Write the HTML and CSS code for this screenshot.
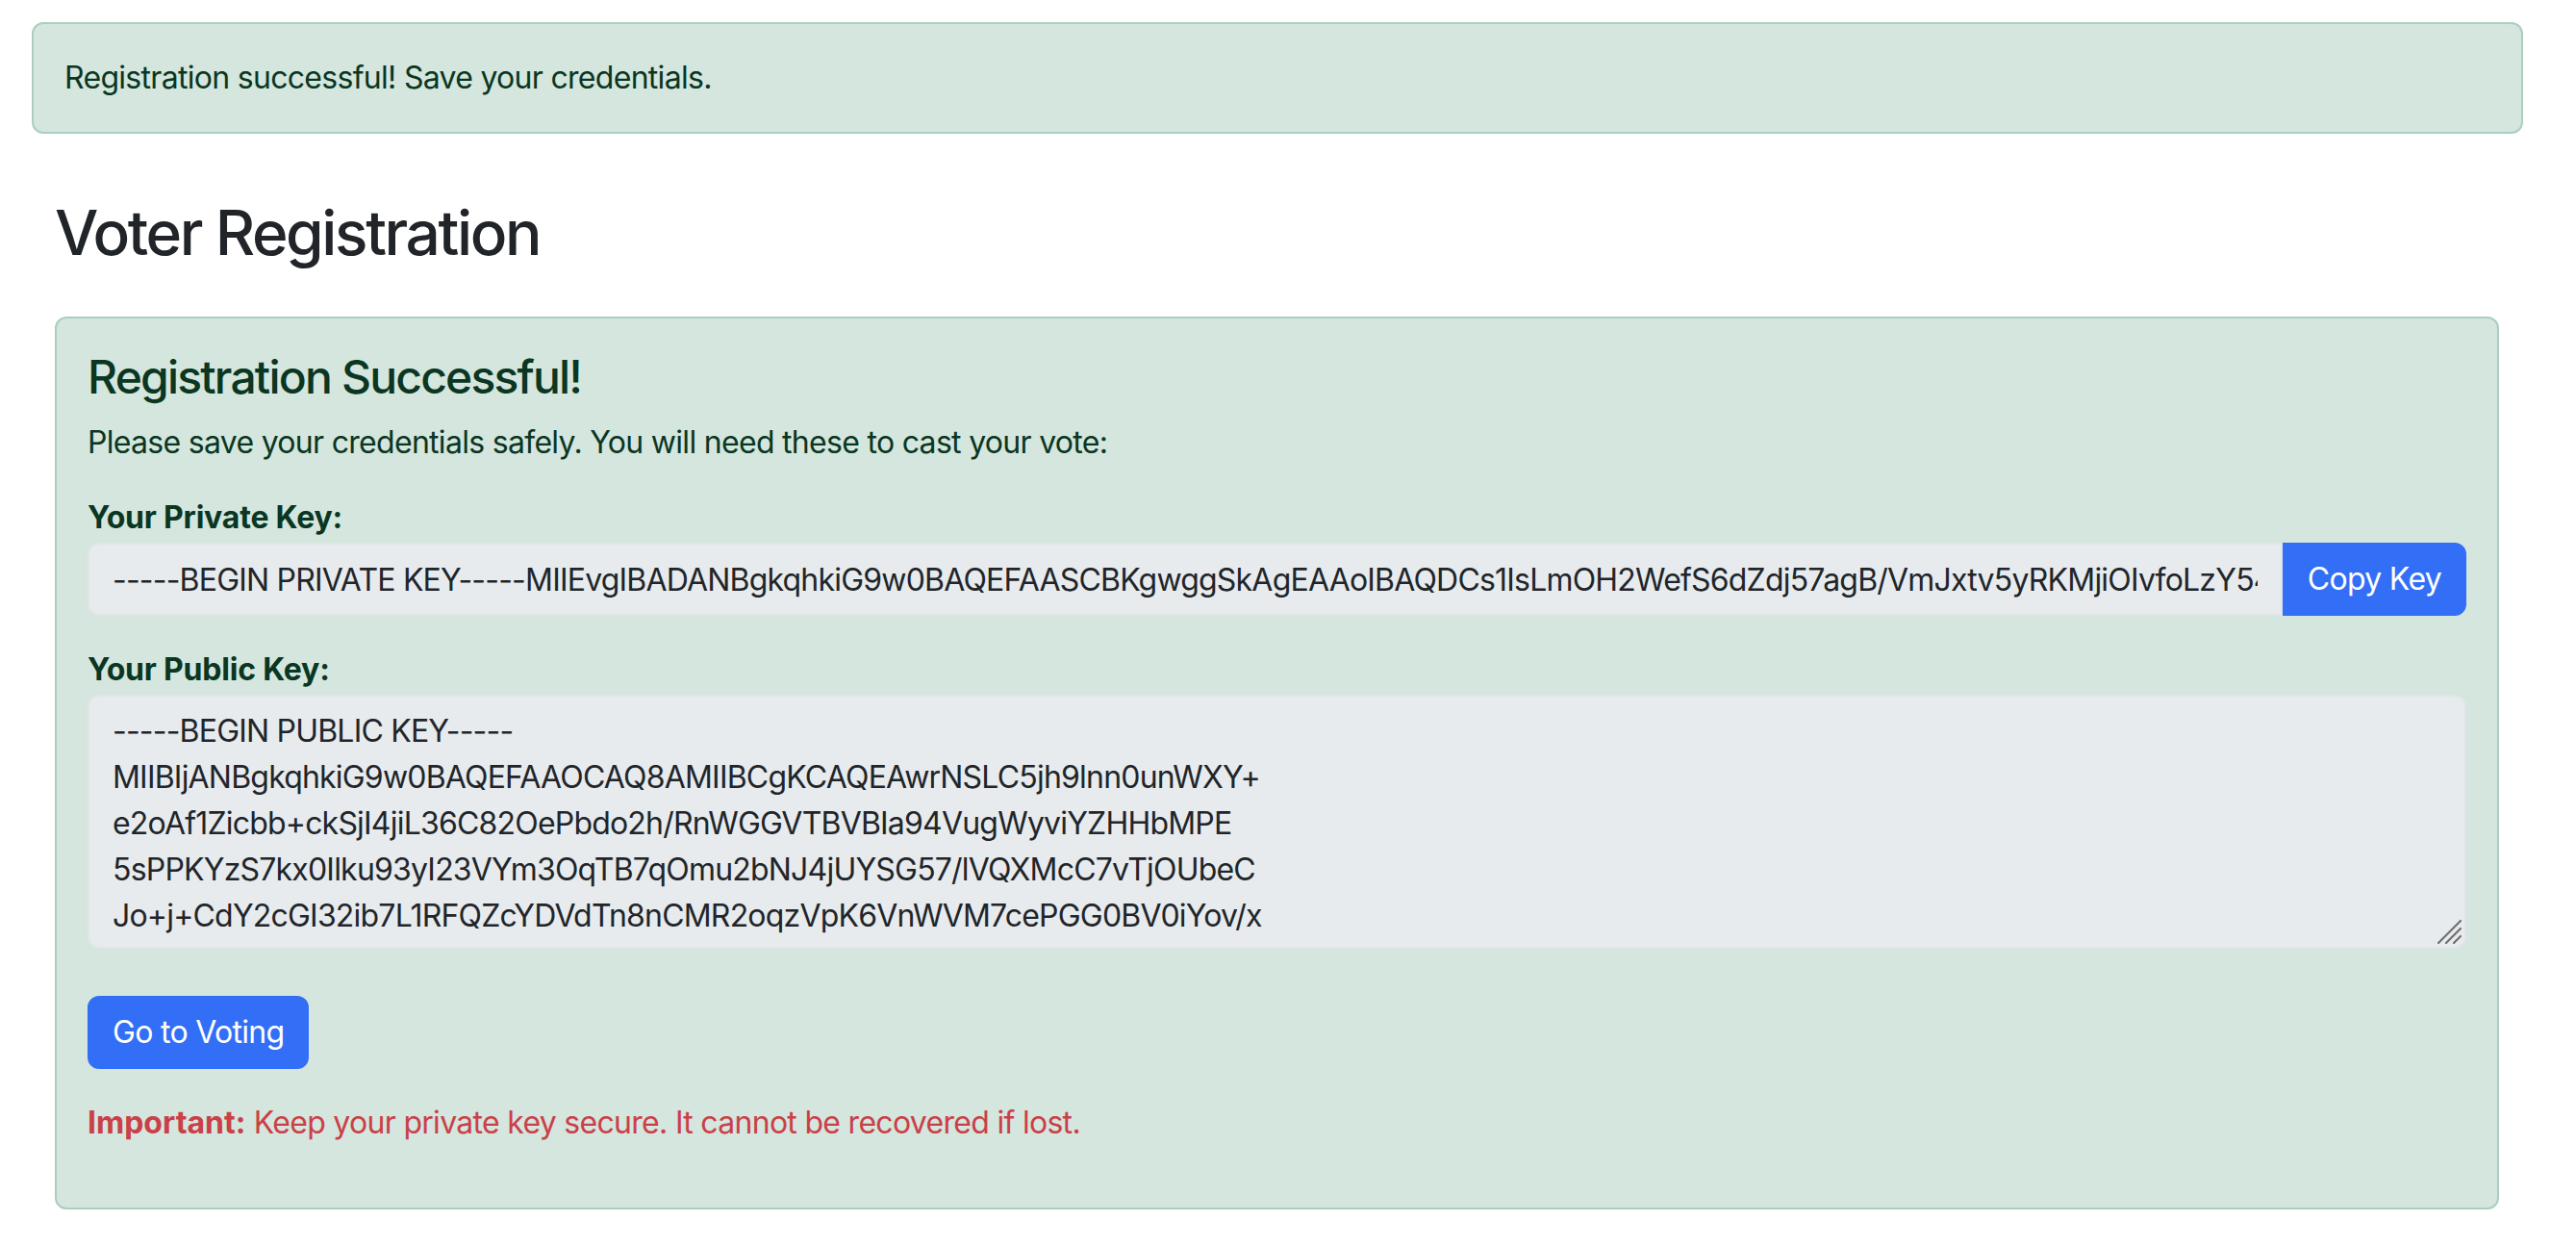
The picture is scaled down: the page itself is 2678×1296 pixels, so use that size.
FILE: index.html
```html
<!DOCTYPE html>
<html lang="en">
<head>
<meta charset="utf-8">
<title>Voter Registration</title>
<link rel="stylesheet" href="styles.css">
</head>
<body>
  <div class="alert alert-top">Registration successful! Save your credentials.</div>

  <main class="container">
    <h2 class="page-title">Voter Registration</h2>

    <section class="alert result-card">
      <h4 class="result-title">Registration Successful!</h4>
      <p class="result-intro">Please save your credentials safely. You will need these to cast your vote:</p>

      <div class="field">
        <label class="field-label" for="privkey">Your Private Key:</label>
        <div class="input-group">
          <input id="privkey" class="form-control" type="text" readonly value="-----BEGIN PRIVATE KEY-----MIIEvgIBADANBgkqhkiG9w0BAQEFAASCBKgwggSkAgEAAoIBAQDCs1IsLmOH2WefS6dZdj57agB/VmJxtv5yRKMjiOIvfoLzY54xQ2uZp8kR3TgH1aVwN7sLc0eYbF6oJd9Mi4WqKtPz2nXhGvE5rUyS8fC3DlB+Aq0Oj7/gLmZw1NpVxT4IsKe6RhFd9Yc2uQbG8oMa5WtJn3PzEv0XiDy7lAk1CrHs4Bf-----END PRIVATE KEY-----">
          <button class="btn btn-primary btn-copy" type="button">Copy Key</button>
        </div>
      </div>

      <div class="field field-textarea">
        <label class="field-label" for="pubkey">Your Public Key:</label>
        <div class="textarea-wrap">
          <textarea id="pubkey" class="form-control key-area" readonly>-----BEGIN PUBLIC KEY-----
MIIBIjANBgkqhkiG9w0BAQEFAAOCAQ8AMIIBCgKCAQEAwrNSLC5jh9lnn0unWXY+
e2oAf1Zicbb+ckSjI4jiL36C82OePbdo2h/RnWGGVTBVBIa94VugWyviYZHHbMPE
5sPPKYzS7kx0Ilku93yI23VYm3OqTB7qOmu2bNJ4jUYSG57/lVQXMcC7vTjOUbeC
Jo+j+CdY2cGI32ib7L1RFQZcYDVdTn8nCMR2oqzVpK6VnWVM7cePGG0BV0iYov/x
pQ3kT8sWn2LhYb5VdX1aF0rE7jZmOg4cNqUe9HtKiRw6BfSzP2yAoCvMlI+Gd3Jx
uQIDAQAB
-----END PUBLIC KEY-----</textarea>
          <svg class="grip" width="26" height="26" viewBox="0 0 26 26" aria-hidden="true">
            <path d="M2 25 L25 2 M10 25 L25 10 M18 25 L25 18" stroke="#707070" stroke-width="2.2" stroke-linecap="round" fill="none"/>
          </svg>
        </div>
      </div>

      <button class="btn btn-primary btn-vote" type="button">Go to Voting</button>

      <p class="warning"><strong>Important:</strong> Keep your private key secure. It cannot be recovered if lost.</p>
    </section>
  </main>
</body>
</html>
```

FILE: styles.css
```css
* {
  box-sizing: border-box;
}

html, body {
  margin: 0;
  padding: 0;
  background: #ffffff;
}

body {
  font-family: Inter, "Noto Sans", "Liberation Sans", sans-serif;
  font-size: 32px;
  line-height: 48px;
  letter-spacing: -0.7px;
  color: #212529;
}

.alert {
  background: #d4e6de;
  border: 2px solid #abcfbe;
  border-radius: 12px;
  color: #0a3622;
}

.alert-top {
  margin: 23px 55px 0 33px;
  padding: 32px 32px;
}

.container {
  margin: 0 80px 0 57px;
}

.page-title {
  margin: 65px 0 48px 0;
  font-size: 64px;
  line-height: 1.2;
  font-weight: 500;
  letter-spacing: -2.4px;
  color: #212529;
}

.result-card {
  padding: 32px;
}

.result-title {
  margin: 0 0 16px 0;
  font-size: 48px;
  line-height: 1.2;
  font-weight: 500;
  letter-spacing: -1.8px;
}

.result-intro {
  margin: 0 0 30px 0;
}

.field {
  margin-bottom: 32px;
}

.field-textarea {
  margin-bottom: 49px;
}

.field-label {
  display: block;
  font-weight: 700;
  letter-spacing: -0.2px;
  margin-bottom: 2px;
}

.input-group {
  display: flex;
  align-items: stretch;
}

.form-control {
  font-family: inherit;
  font-size: 32px;
  line-height: 48px;
  letter-spacing: -0.8px;
  color: #212529;
  background: #e7ebee;
  border: 2px solid #e1e5e8;
  border-radius: 12px;
  padding: 12px 24px;
  outline: none;
}

.input-group .form-control {
  flex: 1 1 auto;
  min-width: 0;
  height: 76px;
  border-top-right-radius: 0;
  border-bottom-right-radius: 0;
}

.textarea-wrap {
  position: relative;
}

.key-area {
  display: block;
  width: 100%;
  height: 264px;
  resize: none;
  overflow: hidden;
  white-space: pre;
}

.grip {
  position: absolute;
  right: 5px;
  bottom: 5px;
  pointer-events: none;
}

.btn {
  font-family: inherit;
  font-size: 32px;
  line-height: 48px;
  font-weight: 400;
  letter-spacing: -0.7px;
  padding: 12px 24px;
  border: 2px solid #336ff6;
  border-radius: 12px;
  cursor: pointer;
}

.btn-primary {
  background: #336ff6;
  color: #ffffff;
}

.btn-copy {
  flex: 0 0 auto;
  border-top-left-radius: 0;
  border-bottom-left-radius: 0;
}

.btn-vote {
  display: inline-block;
}

.warning {
  margin: 32px 0 32px 0;
  color: #cb3f48;
}

.warning strong {
  font-weight: 700;
  letter-spacing: 0;
}
```
